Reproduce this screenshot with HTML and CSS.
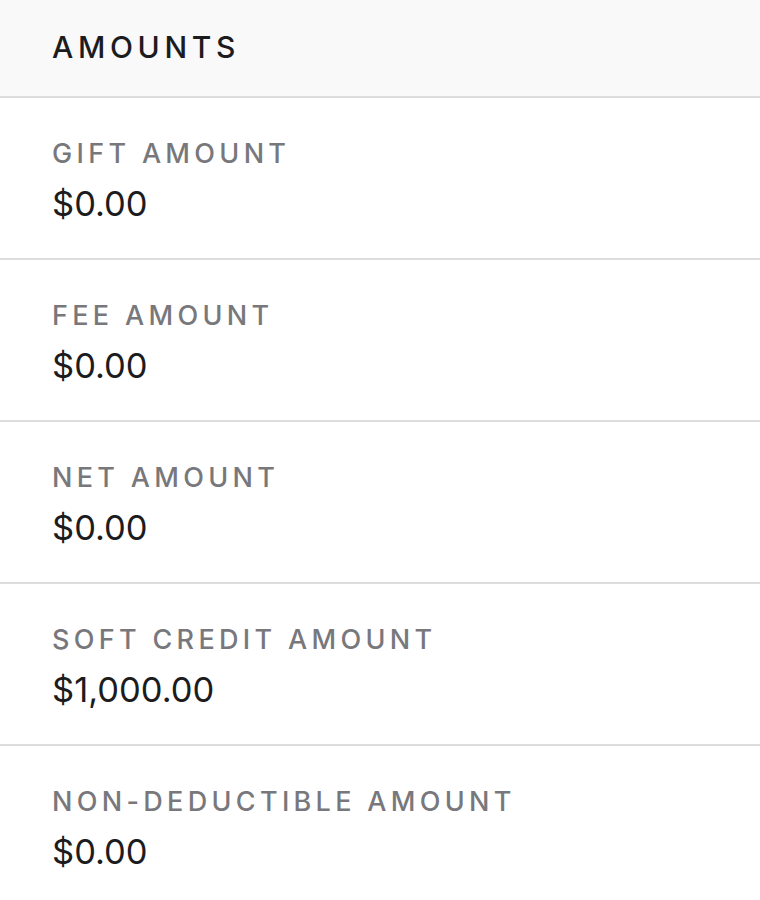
FILE: index.html
```html
<!DOCTYPE html>
<html>
<head>
<meta charset="utf-8">
<link rel="stylesheet" href="styles.css">
</head>
<body>
<div class="panel">
  <div class="panel-header">AMOUNTS</div>
  <div class="row">
    <div class="label">GIFT AMOUNT</div>
    <div class="value">$0.00</div>
  </div>
  <div class="row">
    <div class="label">FEE AMOUNT</div>
    <div class="value">$0.00</div>
  </div>
  <div class="row">
    <div class="label">NET AMOUNT</div>
    <div class="value">$0.00</div>
  </div>
  <div class="row">
    <div class="label">SOFT CREDIT AMOUNT</div>
    <div class="value">$1,000.00</div>
  </div>
  <div class="row">
    <div class="label">NON-DEDUCTIBLE AMOUNT</div>
    <div class="value">$0.00</div>
  </div>
</div>
</body>
</html>
```
FILE: styles.css
```css
html, body {
  margin: 0;
  padding: 0;
  background: #ffffff;
}
body {
  font-family: Inter, "Noto Sans", sans-serif;
  color: #1c1c1e;
}
.panel {
  width: 760px;
}
.panel-header {
  height: 98px;
  box-sizing: border-box;
  padding-left: 52px;
  padding-bottom: 3px;
  display: flex;
  align-items: center;
  background: #f9f9f9;
  border-bottom: 2px solid #dddddd;
  font-size: 30px;
  font-weight: 500;
  letter-spacing: 0.155em;
  color: #1c1c1e;
}
.row {
  height: 162px;
  box-sizing: border-box;
  padding: 39px 52px 0;
  border-bottom: 2px solid #dddddd;
  display: flex;
  flex-direction: column;
}
.label {
  font-size: 27px;
  line-height: 34px;
  font-weight: 500;
  letter-spacing: 0.16em;
  color: #78787c;
}
.value {
  margin-top: 11px;
  font-size: 34.5px;
  line-height: 44px;
  font-weight: 400;
  color: #1c1c1e;
}
```
